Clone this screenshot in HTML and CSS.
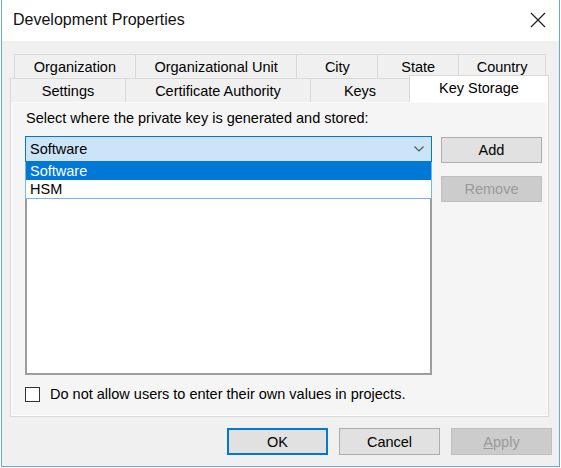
FILE: index.html
```html
<!DOCTYPE html>
<html>
<head>
<meta charset="utf-8">
<link rel="stylesheet" href="styles.css">
</head>
<body>
<div class="window">
  <div class="titlebar">
    <span class="title">Development Properties</span>
    <svg class="close" width="16" height="16" viewBox="0 0 16 16"><path d="M1 1L15 15M15 1L1 15" stroke="#222" stroke-width="1.3" fill="none"/></svg>
  </div>
  <div class="client">
    <div class="tabs">
      <div class="tabrow top">
        <div class="tab t-org">Organization</div>
        <div class="tab t-unit">Organizational Unit</div>
        <div class="tab t-city">City</div>
        <div class="tab t-state">State</div>
        <div class="tab t-country">Country</div>
      </div>
      <div class="tabrow bottom">
        <div class="tab t-settings">Settings</div>
        <div class="tab t-ca">Certificate Authority</div>
        <div class="tab t-keys">Keys</div>
        <div class="tab t-storage selected">Key Storage</div>
      </div>
    </div>
    <div class="panel">
      <div class="label">Select where the private key is generated and stored:</div>
      <div class="main">
        <div class="leftcol">
          <div class="combo">
            <span>Software</span>
            <svg class="chev" width="10" height="6" viewBox="0 0 10 6"><path d="M0.5 0.5L5 5L9.5 0.5" stroke="#555" stroke-width="1.2" fill="none"/></svg>
          </div>
          <div class="listbox"></div>
          <div class="dropdown">
            <div class="opt sel">Software</div>
            <div class="opt">HSM</div>
          </div>
        </div>
        <div class="rightcol">
          <div class="btn">Add</div>
          <div class="btn disabled">Remove</div>
        </div>
      </div>
      <div class="check">
        <span class="box"></span>
        <span>Do not allow users to enter their own values in projects.</span>
      </div>
    </div>
    <div class="footer">
      <div class="btn default">OK</div>
      <div class="btn">Cancel</div>
      <div class="btn disabled"><u>A</u>pply</div>
    </div>
  </div>
</div>
</body>
</html>
```
FILE: styles.css
```css
html, body {
  margin: 0;
  padding: 0;
  background: #ffffff;
}
body {
  font-family: "Liberation Sans", Arial, sans-serif;
  font-size: 14.5px;
  color: #000;
}
.window {
  margin-left: 1px;
  width: 559px;
  height: 467px;
  box-sizing: border-box;
  border: 1px solid #6aa6e0;
  border-top: none;
  display: flex;
  flex-direction: column;
}
.titlebar {
  height: 41px;
  background: #fff;
  display: flex;
  align-items: center;
  justify-content: space-between;
  padding: 0 13px 0 11px;
  flex: none;
}
.title {
  font-size: 16px;
  color: #111;
  margin-top: -2px;
}
.close {
  margin-top: -2px;
}
.client {
  flex: 1;
  background: #f0f0f0;
  padding: 13px 9px 0 8px;
}
.tabs {
  display: flex;
  flex-direction: column;
}
.tabrow {
  display: flex;
  height: 24px;
}
.tabrow.top {
  margin-left: 4px;
  width: 532px;
}
.tabrow.bottom {
  height: 24px;
  width: 539px;
  position: relative;
  z-index: 2;
}
.tab {
  box-sizing: border-box;
  border: 1px solid #d9d9d9;
  border-bottom: none;
  background: #f0f0f0;
  display: flex;
  align-items: center;
  justify-content: center;
  color: #000;
  margin-left: -1px;
  white-space: nowrap;
}
.tab:first-child { margin-left: 0; }
.t-org { width: 122px; }
.t-unit { width: 163px; }
.t-city { width: 82px; }
.t-state { width: 82px; }
.t-country { width: 88px; }
.t-settings { width: 116px; }
.t-ca { width: 186px; }
.t-keys { width: 100px; }
.t-storage { flex: 1; }
.tab.selected {
  background: #fff;
  height: 27px;
  margin-top: -3px;
  align-items: flex-start;
  padding-top: 4px;
}
.panel {
  box-sizing: border-box;
  width: 539px;
  height: 316px;
  margin-top: -1px;
  border: 1px solid #d9d9d9;
  background: #f5f5f5;
  box-shadow: inset 1px 1px 0 #fbfbfb, inset -1px -1px 0 #fbfbfb;
  padding: 8px 0 0 14px;
  position: relative;
  z-index: 1;
}
.label {
  margin-left: 1px;
  height: 17px;
  line-height: 17px;
}
.main {
  display: flex;
  margin-top: 9px;
}
.leftcol {
  position: relative;
  width: 407px;
}
.combo {
  box-sizing: border-box;
  height: 26px;
  border: 1px solid #0078d7;
  background: #cce4f7;
  display: flex;
  align-items: center;
  justify-content: space-between;
  padding: 0 7px 0 4px;
}
.listbox {
  box-sizing: border-box;
  height: 213px;
  background: #fff;
  border: 2px solid #9d9d9d;
  border-top: none;
}
.dropdown {
  position: absolute;
  left: 0;
  top: 26px;
  width: 407px;
  box-sizing: border-box;
  border: 1px solid #7ab3e6;
  border-top: none;
  background: #fff;
}
.opt {
  height: 18px;
  line-height: 18px;
  padding-left: 4px;
}
.opt.sel {
  background: #0078d7;
  color: #fff;
}
.rightcol {
  display: flex;
  flex-direction: column;
  gap: 13px;
  margin-left: 9px;
  padding-top: 1px;
}
.btn {
  box-sizing: border-box;
  width: 101px;
  height: 26px;
  border: 1px solid #adadad;
  background: #e1e1e1;
  display: flex;
  align-items: center;
  justify-content: center;
}
.btn.disabled {
  background: #cccccc;
  border-color: #bfbfbf;
  color: #9a9a9a;
}
.btn.default {
  border: 2px solid #0078d7;
}
.check {
  display: flex;
  align-items: center;
  margin-top: 10px;
  margin-left: 0;
  height: 18px;
}
.box {
  box-sizing: border-box;
  width: 15px;
  height: 15px;
  border: 1px solid #333;
  background: #fff;
  margin-right: 10px;
}
.footer {
  display: flex;
  justify-content: flex-end;
  gap: 11px;
  margin-top: 11px;
  margin-right: -2px;
}
.footer .btn {
  height: 27px;
}
```
